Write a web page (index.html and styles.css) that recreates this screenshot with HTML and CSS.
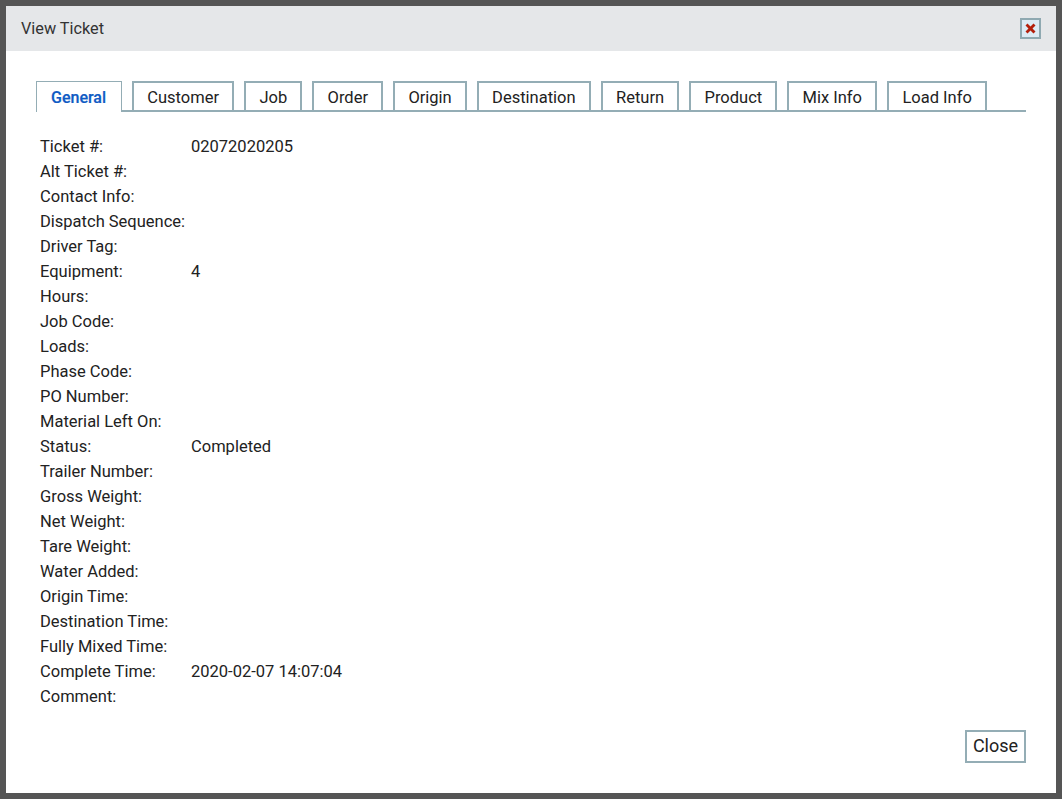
FILE: index.html
```html
<!DOCTYPE html>
<html lang="en">
<head>
<meta charset="utf-8">
<title>View Ticket</title>
<link rel="stylesheet" href="styles.css">
</head>
<body>
<div class="dialog">
  <header class="titlebar">
    <span class="title">View Ticket</span>
    <button class="close-x" aria-label="Close">
      <svg class="close-icon" width="11" height="11" viewBox="0 0 11 11"><path d="M.5 2.5 2.5.5 5.5 3.5 8.5.5 10.5 2.5 7.5 5.5 10.5 8.5 8.5 10.5 5.5 7.5 2.5 10.5.5 8.5 3.5 5.5Z" fill="#b3200c"/></svg>
    </button>
  </header>
  <main class="body">
    <nav class="tabs">
      <a class="tab active">General</a>
      <a class="tab">Customer</a>
      <a class="tab">Job</a>
      <a class="tab">Order</a>
      <a class="tab">Origin</a>
      <a class="tab">Destination</a>
      <a class="tab">Return</a>
      <a class="tab">Product</a>
      <a class="tab">Mix Info</a>
      <a class="tab">Load Info</a>
    </nav>
    <dl class="fields">
      <dt>Ticket #:</dt><dd>02072020205</dd>
      <dt>Alt Ticket #:</dt><dd></dd>
      <dt>Contact Info:</dt><dd></dd>
      <dt>Dispatch Sequence:</dt><dd></dd>
      <dt>Driver Tag:</dt><dd></dd>
      <dt>Equipment:</dt><dd>4</dd>
      <dt>Hours:</dt><dd></dd>
      <dt>Job Code:</dt><dd></dd>
      <dt>Loads:</dt><dd></dd>
      <dt>Phase Code:</dt><dd></dd>
      <dt>PO Number:</dt><dd></dd>
      <dt>Material Left On:</dt><dd></dd>
      <dt>Status:</dt><dd>Completed</dd>
      <dt>Trailer Number:</dt><dd></dd>
      <dt>Gross Weight:</dt><dd></dd>
      <dt>Net Weight:</dt><dd></dd>
      <dt>Tare Weight:</dt><dd></dd>
      <dt>Water Added:</dt><dd></dd>
      <dt>Origin Time:</dt><dd></dd>
      <dt>Destination Time:</dt><dd></dd>
      <dt>Fully Mixed Time:</dt><dd></dd>
      <dt>Complete Time:</dt><dd>2020-02-07 14:07:04</dd>
      <dt>Comment:</dt><dd></dd>
    </dl>
    <footer class="actions">
      <button class="btn">Close</button>
    </footer>
  </main>
</div>
</body>
</html>
```

FILE: styles.css
```css
* { box-sizing: border-box; }
html, body { height: 100%; }
body {
  margin: 0;
  background: #555;
  padding: 6px;
  font-family: Roboto, "Liberation Sans", sans-serif;
  font-size: 16.5px;
  color: #222;
}
.dialog {
  height: 787px;
  background: #fff;
  display: flex;
  flex-direction: column;
}
.titlebar {
  height: 45px;
  flex: none;
  background: #e5e7e9;
  display: flex;
  align-items: center;
  justify-content: space-between;
  padding: 0 15px 1px 15px;
}
.title { color: #333; font-size: 16.25px; }
.close-x {
  width: 21px;
  height: 21px;
  padding: 0;
  display: flex;
  align-items: center;
  justify-content: center;
  background: #dcebf5;
  border: 2px solid #8fa9b1;
}
.body {
  flex: 1;
  display: flex;
  flex-direction: column;
  padding: 30px;
}
.tabs {
  display: flex;
  gap: 10px;
  height: 31px;
  border-bottom: 2px solid #94adb5;
}
.tab {
  height: 29px;
  padding: 0 13.2px;
  border: 2px solid #94adb5;
  border-bottom: 0;
  line-height: 29px;
  background: #fff;
}
.tab.active {
  height: 31px;
  padding: 1px 15px 0 14px;
  border: 1px solid #94adb5;
  border-bottom: 0;
  font-size: 16px;
  font-weight: 500;
  -webkit-text-stroke: 0.2px #0f5bc4;
  color: #0f5bc4;
}
.fields {
  margin: 22px 0 0 4px;
  display: grid;
  grid-template-columns: 151px 1fr;
  grid-auto-rows: 25px;
  line-height: 25px;
}
dt, dd { margin: 0; }
.actions {
  margin-top: auto;
  display: flex;
  justify-content: flex-end;
}
.btn {
  width: 61px;
  height: 33px;
  padding: 0 0 2px;
  background: #fff;
  border: 2px solid #94adb5;
  font: inherit;
  font-size: 18px;
  color: #222;
}
```
